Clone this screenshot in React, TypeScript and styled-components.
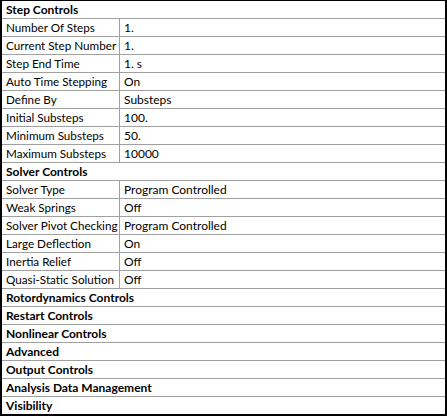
import React from 'react';
import styled, { createGlobalStyle } from 'styled-components';

const GlobalStyle = createGlobalStyle`
  html, body {
    margin: 0;
    padding: 0;
    background: #ffffff;
  }
`;

const Panel = styled.div`
  width: 447px;
  height: 416px;
  box-sizing: border-box;
  border: 1px solid #000000;
  border-left-width: 2px;
  border-right-width: 2px;
  border-bottom-width: 2px;
  background: #ffffff;
  font-family: Lato, 'Noto Sans', sans-serif;
  font-size: 12px;
  color: #000000;
  overflow: hidden;
`;

const Row = styled.div`
  display: grid;
  grid-template-columns: 118px 1fr;
  height: 17px;
  border-bottom: 1px solid #a0a0a0;
  line-height: 17px;
  white-space: nowrap;
`;

const Header = styled.div`
  height: 17px;
  line-height: 17px;
  border-bottom: 1px solid #a0a0a0;
  padding-left: 4px;
  font-weight: 700;
  white-space: nowrap;
`;

const Label = styled.div`
  padding-left: 4px;
  border-right: 1px solid #a0a0a0;
  overflow: hidden;
  font-size: 11.7px;
`;

const Value = styled.div`
  padding-left: 4px;
`;

type Item = { header: string } | { label: string; value: string };

const items: Item[] = [
  { header: 'Step Controls' },
  { label: 'Number Of Steps', value: '1.' },
  { label: 'Current Step Number', value: '1.' },
  { label: 'Step End Time', value: '1. s' },
  { label: 'Auto Time Stepping', value: 'On' },
  { label: 'Define By', value: 'Substeps' },
  { label: 'Initial Substeps', value: '100.' },
  { label: 'Minimum Substeps', value: '50.' },
  { label: 'Maximum Substeps', value: '10000' },
  { header: 'Solver Controls' },
  { label: 'Solver Type', value: 'Program Controlled' },
  { label: 'Weak Springs', value: 'Off' },
  { label: 'Solver Pivot Checking', value: 'Program Controlled' },
  { label: 'Large Deflection', value: 'On' },
  { label: 'Inertia Relief', value: 'Off' },
  { label: 'Quasi-Static Solution', value: 'Off' },
  { header: 'Rotordynamics Controls' },
  { header: 'Restart Controls' },
  { header: 'Nonlinear Controls' },
  { header: 'Advanced' },
  { header: 'Output Controls' },
  { header: 'Analysis Data Management' },
  { header: 'Visibility' },
];

const App = () => (
  <>
    <GlobalStyle />
    <Panel>
      {items.map((item, i) =>
        'header' in item ? (
          <Header key={i}>{item.header}</Header>
        ) : (
          <Row key={i}>
            <Label>{item.label}</Label>
            <Value>{item.value}</Value>
          </Row>
        )
      )}
    </Panel>
  </>
);

export default App;
